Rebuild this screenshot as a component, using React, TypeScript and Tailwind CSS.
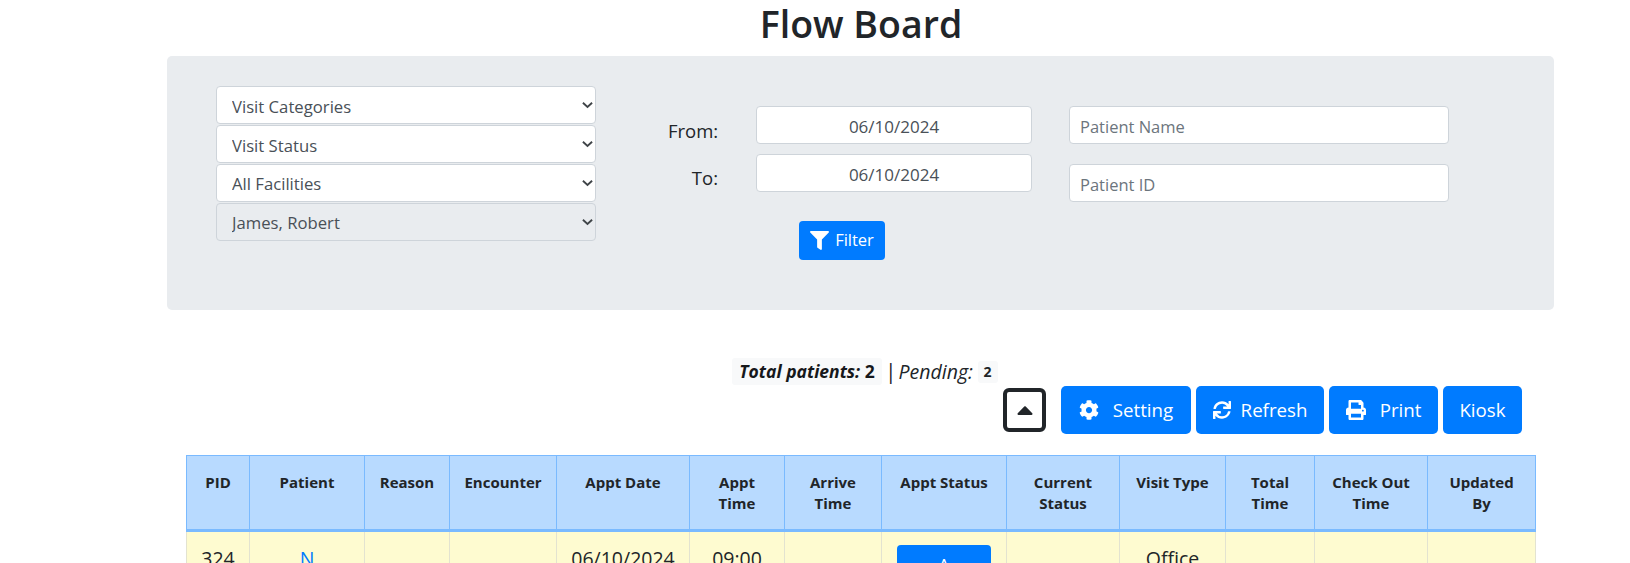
import React from "react";
import { FaCaretUp, FaCog, FaFilter, FaPrint, FaSync } from "react-icons/fa";

const selects = [
  { label: "Visit Categories", disabled: false, pad: "pt-[3px]" },
  { label: "Visit Status", disabled: false, pad: "pt-[3px]" },
  { label: "All Facilities", disabled: false, pad: "pt-[1px]" },
  { label: "James, Robert", disabled: true, pad: "pt-[1px]" },
];

const columns = [
  { title: "PID", width: "w-[63px]" },
  { title: "Patient", width: "w-[115px]" },
  { title: "Reason", width: "w-[85px]" },
  { title: "Encounter", width: "w-[107px]" },
  { title: "Appt Date", width: "w-[133px]" },
  { title: "Appt Time", width: "w-[95px]" },
  { title: "Arrive Time", width: "w-[97px]" },
  { title: "Appt Status", width: "w-[125px]" },
  { title: "Current Status", width: "w-[113px]" },
  { title: "Visit Type", width: "w-[106px]" },
  { title: "Total Time", width: "w-[89px]" },
  { title: "Check Out Time", width: "w-[113px]" },
  { title: "Updated By", width: "w-[108px]" },
];

const bodyCell = "border border-[#e3e3d0] pt-[12px] px-2 pb-3 text-center align-top";

const App: React.FC = () => {
  return (
    <div className="h-[563px] w-[1630px] overflow-hidden bg-white font-['Open_Sans',sans-serif] text-[16px] text-[#212529]">
      {/* Title */}
      <h1 className="h-[56px] pl-[92px] text-center text-[37.5px] leading-[48px] font-semibold">Flow Board</h1>

      {/* Filter panel */}
      <div className="ml-[167px] flex h-[254px] w-[1387px] rounded-[5px] bg-[#e9ecef] pt-[30px] pl-[49px]">
        <div className="flex w-[380px] flex-col gap-[1px]">
          {selects.map((item) => (
            <div key={item.label} className="relative h-[38px]">
              <select
                disabled={item.disabled}
                className={`h-full w-full appearance-none rounded-[4px] border border-[#ced4da] pl-[15px] text-[16.7px] text-[#495057] ${item.pad} ${item.disabled ? "bg-[#e9ecef] opacity-100" : "bg-white"}`}
              >
                <option>{item.label}</option>
              </select>
              <svg viewBox="0 0 12 8" className="absolute top-[15px] right-[3px] h-[8px] w-[11px]" fill="none" stroke="#3f4448" strokeWidth="2">
                <path d="M1 1.5 6 6.2l5-4.7" />
              </svg>
            </div>
          ))}
        </div>

        <div className="ml-[72px] flex flex-col pt-[20px]">
          <div className="flex h-[38px] items-center">
            <label className="mt-[12px] w-[50px] text-right text-[18.5px]">From:</label>
            <input readOnly value="06/10/2024" className="ml-[38px] h-[38px] w-[276px] rounded-[4px] border border-[#ced4da] bg-white pt-[2px] text-center text-[17px] text-[#495057]" />
          </div>
          <div className="mt-[10px] flex h-[38px] items-center">
            <label className="mt-[9px] w-[50px] text-right text-[18.5px]">To:</label>
            <input readOnly value="06/10/2024" className="ml-[38px] h-[38px] w-[276px] rounded-[4px] border border-[#ced4da] bg-white pt-[2px] text-center text-[17px] text-[#495057]" />
          </div>
          <button className="mt-[29px] ml-[131px] flex h-[39px] w-[86px] items-center justify-center gap-[6px] rounded-[4px] bg-[#007bff] text-[16.5px] text-white">
            <FaFilter className="h-[19px] w-[19px]" />
            Filter
          </button>
        </div>

        <div className="ml-[37px] flex flex-col pt-[20px]">
          <input placeholder="Patient Name" className="h-[38px] w-[380px] rounded-[4px] border border-[#ced4da] bg-white pt-[2px] pl-[10px] text-[16.5px] placeholder:text-[#6c757d]" />
          <input placeholder="Patient ID" className="mt-[20px] h-[38px] w-[380px] rounded-[4px] border border-[#ced4da] bg-white pt-[2px] pl-[10px] text-[16.5px] placeholder:text-[#6c757d]" />
        </div>
      </div>

      {/* Counts */}
      <div className="mt-[48px] ml-[732px] flex h-[27px] items-center text-[19.5px] italic">
        <span className="flex h-[27px] w-[150px] items-center justify-center rounded-[3px] bg-[#f8f9fa] text-[17.5px] font-bold text-[#16181b]">
          Total patients:&nbsp;<span className="not-italic">2</span>
        </span>
        <span className="ml-[3px] text-[21px] not-italic">|</span>
        <span className="ml-[2px] w-[79px]">Pending:</span>
        <span className="flex h-[22px] w-[20px] items-center justify-center rounded-[3px] bg-[#f8f9fa] text-[14px] font-bold not-italic">2</span>
      </div>

      {/* Actions */}
      <div className="mt-[1px] ml-[1003px] flex h-[48px] items-start text-[18.7px] text-white">
        <button className="mt-[2px] flex h-[44px] w-[43px] items-center justify-center rounded-[6px] border-[4px] border-[#212529] bg-white text-[#212529]">
          <FaCaretUp className="h-[26px] w-[26px]" />
        </button>
        <button className="ml-[15px] flex h-[48px] w-[130px] items-center justify-center gap-[14px] rounded-[5px] bg-[#007bff]">
          <FaCog className="h-[20px] w-[20px]" />
          Setting
        </button>
        <button className="ml-[5px] flex h-[48px] w-[128px] items-center justify-center gap-[10px] rounded-[5px] bg-[#007bff]">
          <FaSync className="h-[18px] w-[18px]" />
          Refresh
        </button>
        <button className="ml-[5px] flex h-[48px] w-[109px] items-center justify-center gap-[14px] rounded-[5px] bg-[#007bff]">
          <FaPrint className="h-[20px] w-[20px]" />
          Print
        </button>
        <button className="ml-[5px] flex h-[48px] w-[79px] items-center justify-center rounded-[5px] bg-[#007bff]">Kiosk</button>
      </div>

      {/* Patient table */}
      <table className="mt-[21px] ml-[186px] w-[1349px] table-fixed border-collapse">
        <colgroup>
          {columns.map((col) => (
            <col key={col.title} className={col.width} />
          ))}
        </colgroup>
        <thead>
          <tr className="h-[75px] bg-[#b8daff]">
            {columns.map((col) => (
              <th key={col.title} className="border border-b-[3px] border-[#7abaff] px-3 pt-[16px] pb-0 align-top text-[15px] leading-[21px] font-bold">
                {col.title}
              </th>
            ))}
          </tr>
        </thead>
        <tbody>
          <tr className="bg-[#fefbd0] text-[19.5px]">
            <td className={bodyCell}>324</td>
            <td className={`${bodyCell} text-[#007bff]`}>N</td>
            <td className={bodyCell}></td>
            <td className={bodyCell}></td>
            <td className={bodyCell}>06/10/2024</td>
            <td className={bodyCell}>09:00</td>
            <td className={bodyCell}></td>
            <td className={bodyCell}>
              <div className="mx-auto mt-[1px] flex h-[60px] w-[94px] justify-center rounded-[4px] bg-[#007bff] pt-[6px] text-white">A</div>
            </td>
            <td className={bodyCell}></td>
            <td className={bodyCell}>Office</td>
            <td className={bodyCell}></td>
            <td className={bodyCell}></td>
            <td className={bodyCell}></td>
          </tr>
        </tbody>
      </table>
    </div>
  );
};

export default App;
